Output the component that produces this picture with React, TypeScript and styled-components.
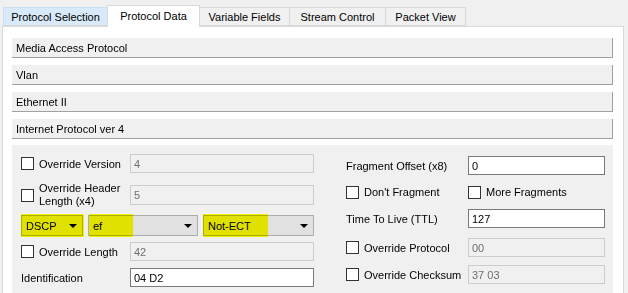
import styled, { createGlobalStyle } from 'styled-components';

const GlobalStyle = createGlobalStyle`
  html, body {
    margin: 0;
    padding: 0;
    background: #f0f0f0;
    font-family: "Liberation Sans", Arial, sans-serif;
    font-size: 11px;
    color: #000;
  }
`;

const tabs = [
  { label: 'Protocol Selection', width: 105, hover: true },
  { label: 'Protocol Data', width: 93, active: true },
  { label: 'Variable Fields', width: 91 },
  { label: 'Stream Control', width: 97 },
  { label: 'Packet View', width: 81 },
];

const sections = ['Media Access Protocol', 'Vlan', 'Ethernet II', 'Internet Protocol ver 4'];

function App() {
  return (
    <Window>
      <GlobalStyle />
      <TabBar>
        {tabs.map((t) => (
          <Tab key={t.label} $width={t.width} $active={t.active} $hover={t.hover}>
            {t.label}
          </Tab>
        ))}
      </TabBar>
      <Pane>
        <Sections>
          {sections.map((s) => (
            <SectionBar key={s}>{s}</SectionBar>
          ))}
        </Sections>
        <Content>
          <LeftColumn>
            <Row $height={19}>
              <CheckLabel $width={109}>
                <Box />
                Override Version
              </CheckLabel>
              <TextBox $disabled>4</TextBox>
            </Row>
            <Row $height={20} $top={12}>
              <CheckLabel $width={109}>
                <Box />
                <TwoLine>
                  Override Header
                  <br />
                  Length (x4)
                </TwoLine>
              </CheckLabel>
              <TextBox $disabled>5</TextBox>
            </Row>
            <ComboRow>
              <Combo $width={62}>
                DSCP
                <Arrow />
                <Highlight $left={-1} $width={63} />
              </Combo>
              <Combo $width={110}>
                ef
                <Arrow />
                <Highlight $left={0} $width={44} />
              </Combo>
              <Combo $width={111}>
                Not-ECT
                <Arrow />
                <Highlight $left={-1} $width={65} />
              </Combo>
            </ComboRow>
            <Row $height={19} $top={6}>
              <CheckLabel $width={109}>
                <Box />
                Override Length
              </CheckLabel>
              <TextBox $disabled>42</TextBox>
            </Row>
            <Row $height={19} $top={7}>
              <Label $width={109}>Identification</Label>
              <TextBox>04 D2</TextBox>
            </Row>
          </LeftColumn>
          <RightColumn>
            <Row $height={19}>
              <Label $width={122}>Fragment Offset (x8)</Label>
              <TextBox>0</TextBox>
            </Row>
            <Row $height={14} $top={10}>
              <CheckLabel $width={122}>
                <Box />
                Don't Fragment
              </CheckLabel>
              <CheckLabel>
                <Box />
                More Fragments
              </CheckLabel>
            </Row>
            <Row $height={19} $top={10}>
              <Label $width={122}>Time To Live (TTL)</Label>
              <TextBox>127</TextBox>
            </Row>
            <Row $height={19} $top={10}>
              <CheckLabel $width={122}>
                <Box />
                Override Protocol
              </CheckLabel>
              <TextBox $disabled>00</TextBox>
            </Row>
            <Row $height={19} $top={8}>
              <CheckLabel $width={122}>
                <Box />
                Override Checksum
              </CheckLabel>
              <TextBox $disabled>37 03</TextBox>
            </Row>
          </RightColumn>
        </Content>
      </Pane>
    </Window>
  );
}

export default App;

const Window = styled.div`
  width: 628px;
  height: 293px;
  overflow: hidden;
  display: flex;
  flex-direction: column;
  box-sizing: border-box;
  padding-top: 5px;
`;

const TabBar = styled.div`
  display: flex;
  align-items: flex-end;
  height: 21px;
  padding-left: 3px;
  position: relative;
  z-index: 1;
`;

const Tab = styled.div<{ $width: number; $active?: boolean; $hover?: boolean }>`
  box-sizing: border-box;
  width: ${(p) => p.$width}px;
  height: ${(p) => (p.$active ? 22 : 19)}px;
  margin-left: -1px;
  display: flex;
  align-items: center;
  justify-content: center;
  padding-bottom: ${(p) => (p.$active ? 2 : 0)}px;
  border: 1px solid ${(p) => (p.$hover ? '#c9dff2' : '#d9d9d9')};
  border-bottom: ${(p) => (p.$active ? 'none' : '1px solid #d9d9d9')};
  background: ${(p) => (p.$active ? '#ffffff' : p.$hover ? '#d8eaf9' : '#f0f0f0')};
  margin-bottom: ${(p) => (p.$active ? -1 : 0)}px;
  white-space: nowrap;
  &:first-child {
    margin-left: 0;
  }
`;

const Pane = styled.div`
  flex: 1;
  margin-left: 2px;
  width: 622px;
  box-sizing: border-box;
  border: 1px solid #d9d9d9;
  border-bottom: none;
  background: #ffffff;
  padding: 11px 10px 0 9px;
  display: flex;
  flex-direction: column;
`;

const Sections = styled.div`
  display: flex;
  flex-direction: column;
  gap: 7px;
`;

const SectionBar = styled.div`
  box-sizing: border-box;
  height: 20px;
  background: #f0f0f0;
  border-right: 1px solid #a0a0a0;
  border-bottom: 1px solid #a0a0a0;
  padding-left: 4px;
  display: flex;
  align-items: center;
`;

const Content = styled.div`
  flex: 1;
  margin-top: 6px;
  background: #f0f0f0;
  display: flex;
  gap: 32px;
  padding: 9px 0 0 9px;
`;

const LeftColumn = styled.div`
  width: 293px;
  display: flex;
  flex-direction: column;
`;

const RightColumn = styled.div`
  width: 259px;
  display: flex;
  flex-direction: column;
  margin-top: 2px;
`;

const Row = styled.div<{ $height: number; $top?: number }>`
  display: flex;
  align-items: center;
  height: ${(p) => p.$height}px;
  margin-top: ${(p) => p.$top ?? 0}px;
`;

const Label = styled.div<{ $width?: number }>`
  width: ${(p) => (p.$width ? `${p.$width}px` : 'auto')};
  flex-shrink: 0;
  white-space: nowrap;
`;

const CheckLabel = styled.label<{ $width?: number }>`
  width: ${(p) => (p.$width ? `${p.$width}px` : 'auto')};
  flex-shrink: 0;
  display: flex;
  align-items: center;
  gap: 5px;
  white-space: nowrap;
`;

const TwoLine = styled.span`
  line-height: 13px;
`;

const Box = styled.span`
  box-sizing: border-box;
  width: 13px;
  height: 13px;
  flex-shrink: 0;
  background: #ffffff;
  border: 1px solid #333333;
`;

const TextBox = styled.div<{ $disabled?: boolean }>`
  flex: 1;
  box-sizing: border-box;
  height: 100%;
  display: flex;
  align-items: center;
  padding-left: 3px;
  background: ${(p) => (p.$disabled ? '#f0f0f0' : '#ffffff')};
  border: 1px solid ${(p) => (p.$disabled ? '#cccccc' : '#7a7a7a')};
  color: ${(p) => (p.$disabled ? '#6d6d6d' : '#000000')};
`;

const ComboRow = styled.div`
  display: flex;
  gap: 5px;
  height: 21px;
  margin-top: 10px;
`;

const Combo = styled.div<{ $width: number }>`
  position: relative;
  box-sizing: border-box;
  width: ${(p) => p.$width}px;
  height: 21px;
  display: flex;
  align-items: center;
  justify-content: space-between;
  padding: 0 5px 0 4px;
  background: #e1e1e1;
  border: 1px solid #adadad;
`;

const Arrow = styled.span`
  width: 0;
  height: 0;
  border-left: 4px solid transparent;
  border-right: 4px solid transparent;
  border-top: 4px solid #000000;
`;

const Highlight = styled.span<{ $left: number; $width: number }>`
  position: absolute;
  top: -2px;
  bottom: -2px;
  left: ${(p) => p.$left}px;
  width: ${(p) => p.$width}px;
  background: #ffff00;
  mix-blend-mode: multiply;
  border-radius: 1px;
  pointer-events: none;
`;
